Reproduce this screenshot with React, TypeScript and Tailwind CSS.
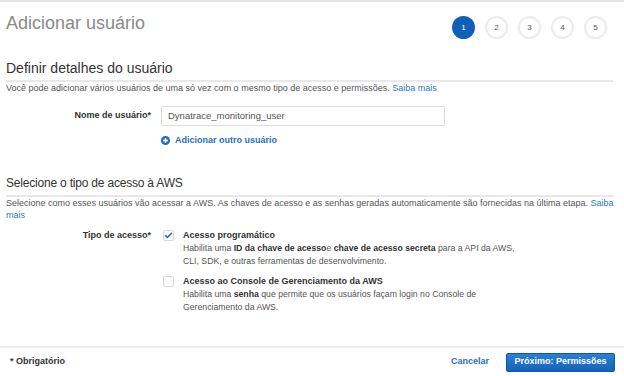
import { Check } from 'lucide-react';

const steps = [1, 2, 3, 4, 5];

function Link({ children }: { children: React.ReactNode }) {
  return <span className="text-[#2a7ac9]">{children}</span>;
}

export default function App() {
  return (
    <div className="w-[624px] h-[376px] bg-white border-t-2 border-[#e4e4e4] flex flex-col overflow-hidden font-['Liberation_Sans',Arial,sans-serif] text-[#444]">
      {/* header with wizard steps */}
      <div className="flex items-start justify-between pl-[6px] pr-[17px] pt-[9px]">
        <h1 className="text-[18px] leading-[24px] text-[#8a8a8a]">Adicionar usuário</h1>
        <div className="flex gap-[10px] pt-[5px]">
          {steps.map((n) => (
            <div
              key={n}
              className={
                n === 1
                  ? 'w-[23px] h-[23px] rounded-full bg-[#1060b8] text-white text-[8px] flex items-center justify-center'
                  : 'w-[23px] h-[23px] rounded-full border-2 border-[#ececec] text-[#555] text-[8px] flex items-center justify-center'
              }
            >
              {n}
            </div>
          ))}
        </div>
      </div>

      {/* user details */}
      <div className="px-[6px] mt-[20px]">
        <h2 className="text-[14px] leading-[18px] text-[#333] pb-[3px] border-b-2 border-[#e8e8e8] mr-[5px]">
          Definir detalhes do usuário
        </h2>
        <p className="text-[9px] leading-[12px] mt-[0px] text-[#555]">
          Você pode adicionar vários usuários de uma só vez com o mesmo tipo de acesso e permissões. <Link>Saiba mais</Link>
        </p>
      </div>

      <div className="flex items-center mt-[12px]">
        <label className="w-[161px] text-right pr-[10px] text-[9px] font-bold text-[#333]">Nome de usuário*</label>
        <div className="w-[284px] h-[20px] border border-[#dcdcdc] rounded-[2px] flex items-center px-[6px] text-[9.5px] text-[#555]">
          Dynatrace_monitoring_user
        </div>
      </div>
      <div className="flex items-center gap-[5px] ml-[161px] mt-[8px] text-[9px] font-bold text-[#1f6ec2]">
        <svg width="9" height="9" viewBox="0 0 9 9">
          <circle cx="4.5" cy="4.5" r="4.5" fill="#1f6ec2" />
          <path d="M4.5 2v5M2 4.5h5" stroke="white" strokeWidth="1.6" />
        </svg>
        Adicionar outro usuário
      </div>

      {/* access type */}
      <div className="px-[6px] mt-[27px]">
        <h2 className="text-[12px] leading-[17px] tracking-[-0.2px] text-[#333] pb-[3px] border-b-2 border-[#e8e8e8] mr-[5px]">
          Selecione o tipo de acesso à AWS
        </h2>
        <p className="text-[9px] leading-[12px] mt-[0px] text-[#555]">
          Selecione como esses usuários vão acessar a AWS. As chaves de acesso e as senhas geradas automaticamente são fornecidas na última etapa. <Link>Saiba</Link> <Link>mais</Link>
        </p>
      </div>

      <div className="flex mt-[8px]">
        <label className="w-[161px] text-right pr-[10px] text-[9px] leading-[13px] font-bold text-[#333]">Tipo de acesso*</label>
        <div className="flex flex-col gap-[7px] ml-[2px]">
          <div className="flex gap-[9px]">
            <div className="w-[11px] h-[11px] mt-[1px] rounded-[2px] border border-[#d8d8d8] flex items-center justify-center">
              <Check className="w-[9px] h-[9px] text-[#1f6ec2]" strokeWidth={4} />
            </div>
            <div className="text-[8.7px] leading-[13px] text-[#555]">
              <div className="text-[9px] font-bold text-[#333]">Acesso programático</div>
              <div>
                Habilita uma <b className="text-[#333]">ID da chave de acesso</b>e <b className="text-[#333]">chave de acesso secreta</b> para a API da AWS,
              </div>
              <div>CLI, SDK, e outras ferramentas de desenvolvimento.</div>
            </div>
          </div>
          <div className="flex gap-[9px]">
            <div className="w-[11px] h-[11px] mt-[1px] rounded-[2px] border border-[#d8d8d8]" />
            <div className="text-[8.7px] leading-[13px] text-[#555]">
              <div className="text-[9px] font-bold text-[#333]">Acesso ao Console de Gerenciamento da AWS</div>
              <div>
                Habilita uma <b className="text-[#333]">senha</b> que permite que os usuários façam login no Console de
              </div>
              <div>Gerenciamento da AWS.</div>
            </div>
          </div>
        </div>
      </div>

      {/* footer */}
      <div className="mt-auto h-[30px] border-t-2 border-[#ececec] flex items-center pl-[10px] pr-[9px]">
        <span className="text-[9px] font-bold text-[#333]">* Obrigatório</span>
        <span className="ml-auto text-[9px] font-bold text-[#1f6ec2]">Cancelar</span>
        <button className="ml-[17px] w-[109px] h-[19px] rounded-[2px] bg-gradient-to-b from-[#2b7fd4] to-[#1563b8] border border-[#0f57a3] text-white text-[9px] font-bold">
          Próximo: Permissões
        </button>
      </div>
    </div>
  );
}
